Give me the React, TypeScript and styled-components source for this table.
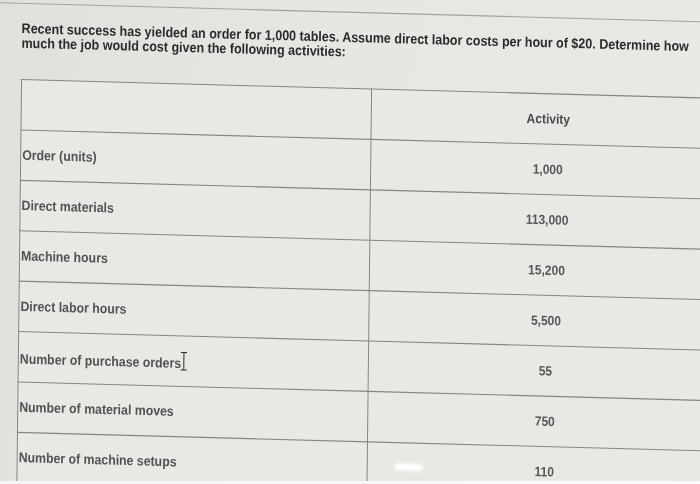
import styled, { createGlobalStyle } from "styled-components";

// rows of the activity table, as shown on the screen
const rows = [
  { label: "Order (units)", value: "1,000" },
  { label: "Direct materials", value: "113,000" },
  { label: "Machine hours", value: "15,200" },
  { label: "Direct labor hours", value: "5,500" },
  { label: "Number of purchase orders", value: "55", cursor: true },
  { label: "Number of material moves", value: "750" },
  { label: "Number of machine setups", value: "110" },
];

const GlobalStyle = createGlobalStyle`
  html, body {
    margin: 0;
    padding: 0;
    background: #e3e3e0;
    overflow: hidden;
  }
`;

export default function App() {
  return (
    <>
      <GlobalStyle />
      <Page>
        <Sheet>
          <TopRule />
          <Question>
            Recent success has yielded an order for 1,000 tables. Assume direct
            labor costs per hour of $20. Determine how
            <br />
            much the job would cost given the following activities:
          </Question>
          <Table>
            <colgroup>
              <col style={{ width: 350 }} />
              <col style={{ width: 354 }} />
            </colgroup>
            <tbody>
              <tr>
                <LabelCell />
                <ValueCell $head>Activity</ValueCell>
              </tr>
              {rows.map((r) => (
                <tr key={r.label}>
                  <LabelCell>
                    {r.label}
                    {r.cursor && <TextCursor />}
                  </LabelCell>
                  <ValueCell>{r.value}</ValueCell>
                </tr>
              ))}
            </tbody>
          </Table>
          <Glare />
        </Sheet>
        <BottomEdge />
      </Page>
    </>
  );
}

function TextCursor() {
  return (
    <CursorIcon width="8" height="18" viewBox="0 0 8 18">
      <path
        d="M1 1.2h2.2M4.8 1.2H7M4 1.6v14.8M1 16.8h2.2M4.8 16.8H7M3.2 1.2c.5 0 .8.2.8.5c0-.3.3-.5.8-.5M3.2 16.8c.5 0 .8-.2.8-.5c0 .3.3.5.8.5"
        stroke="#2c2c2c"
        strokeWidth="1"
        fill="none"
      />
    </CursorIcon>
  );
}

const Page = styled.div`
  position: relative;
  width: 700px;
  height: 484px;
  overflow: hidden;
  background: linear-gradient(100deg, #e0e0dd 0%, #e6e6e3 45%, #e9e9e6 100%);
  filter: blur(0.35px);
`;

/* the photo is taken at a slight angle: shear and stretch the whole sheet */
const Sheet = styled.div`
  position: relative;
  width: 760px;
  padding-top: 2px;
  transform: matrix(1, 0.027, -0.013, 1.12, 0, 0);
  transform-origin: 0 0;
  font-family: "Liberation Sans", Arial, sans-serif;
`;

const TopRule = styled.div`
  border-top: 1.5px solid #a2a2a0;
  width: 760px;
`;

const Question = styled.p`
  margin: 16px 0 0 22px;
  font-size: 12.5px;
  line-height: 13.4px;
  font-weight: 700;
  color: #2b2b2c;
  white-space: nowrap;
`;

const Table = styled.table`
  margin: 24px 0 0 22px;
  width: 704px;
  border-collapse: collapse;
  table-layout: fixed;
  background: #e8e8e5;

  td {
    height: 44px;
    border: 1.5px solid #858584;
    padding: 0;
    font-size: 12.3px;
    font-weight: 700;
    color: #525253;
    vertical-align: middle;
  }
`;

const LabelCell = styled.td`
  padding-left: 1px !important;
  text-align: left;
`;

const ValueCell = styled.td<{ $head?: boolean }>`
  text-align: center;
  font-size: 12px !important;
  color: ${(p) => (p.$head ? "#4a4a4c" : "#58585a")} !important;
`;

const CursorIcon = styled.svg`
  vertical-align: -3px;
  margin-left: -1px;
`;

const Glare = styled.div`
  position: absolute;
  left: 400px;
  top: 404px;
  width: 28px;
  height: 6px;
  border-radius: 4px;
  background: #ffffff;
  filter: blur(1.5px);
`;

const BottomEdge = styled.div`
  position: absolute;
  left: 0;
  right: 0;
  bottom: 0;
  height: 3px;
  background: linear-gradient(90deg, #f4f4f2, #fbfbfa);
`;
